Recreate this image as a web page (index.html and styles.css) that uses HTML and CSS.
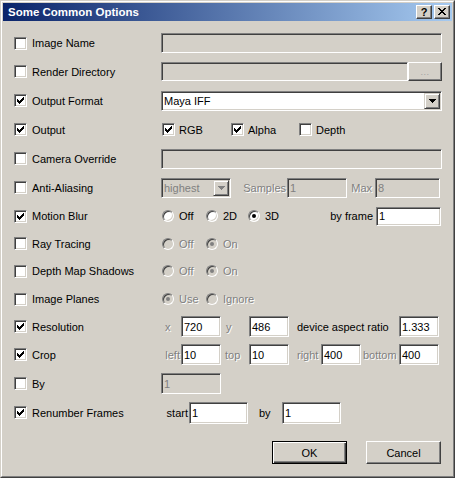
FILE: index.html
```html
<!DOCTYPE html>
<html>
<head>
<meta charset="utf-8">
<title>Some Common Options</title>
<link rel="stylesheet" href="styles.css">
</head>
<body>
<svg class="defs" width="0" height="0" aria-hidden="true">
  <symbol id="chk" viewBox="0 0 9 9"><path d="M1 3h1v1h1v1h1v-1h1v-1h1v-1h1v-1h1v3h-1v1h-1v1h-1v1h-1v1h-1v-1h-1v-1h-1z"/></symbol>
  <symbol id="arr" viewBox="0 0 7 4"><path d="M0 0h7v1h-1v1h-1v1h-1v1h-1v-1h-1v-1h-1v-1h-1z"/></symbol>
  <symbol id="cls" viewBox="0 0 8 7"><path d="M0 0h2v1h-2zM6 0h2v1h-2zM1 1h2v1h-2zM5 1h2v1h-2zM2 2h4v1h-4zM3 3h2v1h-2zM2 4h4v1h-4zM1 5h2v1h-2zM5 5h2v1h-2zM0 6h2v1h-2zM6 6h2v1h-2z"/></symbol>
</svg>
<div class="win">
  <div class="frame">
    <div class="titlebar">
      <span class="title">Some Common Options</span>
      <div class="tbtns">
        <span class="tbtn q">?</span>
        <span class="tbtn"><svg class="ico-x"><use href="#cls"/></svg></span>
      </div>
    </div>
    <div class="body">
      <div class="grid">
        <div class="lc"><span class="cb"></span><span>Image Name</span></div>
        <div class="rc"><span class="fld dis full"></span></div>

        <div class="lc"><span class="cb"></span><span>Render Directory</span></div>
        <div class="rc"><span class="fld dis h19 grow"></span><span class="dots">...</span></div>

        <div class="lc"><span class="cb"><svg class="ico-chk"><use href="#chk"/></svg></span><span>Output Format</span></div>
        <div class="rc"><div class="combo full"><span class="combo-text">Maya IFF</span><span class="abtn"><svg class="ico-arr"><use href="#arr"/></svg></span></div></div>

        <div class="lc"><span class="cb"><svg class="ico-chk"><use href="#chk"/></svg></span><span>Output</span></div>
        <div class="rc opts">
          <div class="opt"><span class="cb"><svg class="ico-chk"><use href="#chk"/></svg></span><span>RGB</span></div>
          <div class="opt"><span class="cb"><svg class="ico-chk"><use href="#chk"/></svg></span><span>Alpha</span></div>
          <div class="opt"><span class="cb"></span><span>Depth</span></div>
        </div>

        <div class="lc"><span class="cb"></span><span>Camera Override</span></div>
        <div class="rc"><span class="fld dis full"></span></div>

        <div class="lc"><span class="cb"></span><span>Anti-Aliasing</span></div>
        <div class="rc">
          <div class="combo dis w70"><span class="combo-text">highest</span><span class="abtn"><svg class="ico-arr"><use href="#arr"/></svg></span></div>
          <span class="slot dim right s-samples">Samples</span>
          <span class="fld dis w60">1</span>
          <span class="slot dim right s-max">Max</span>
          <span class="fld dis w65">8</span>
        </div>

        <div class="lc"><span class="cb"><svg class="ico-chk"><use href="#chk"/></svg></span><span>Motion Blur</span></div>
        <div class="rc radios">
          <div class="ri w44"><span class="rb"></span><span>Off</span></div>
          <div class="ri w42"><span class="rb"></span><span>2D</span></div>
          <div class="ri"><span class="rb on"></span><span>3D</span></div>
          <span class="byframe">by frame</span>
          <span class="fld w65 h19">1</span>
        </div>

        <div class="lc"><span class="cb"></span><span>Ray Tracing</span></div>
        <div class="rc radios">
          <div class="ri w44"><span class="rb dis"></span><span class="dim">Off</span></div>
          <div class="ri"><span class="rb dis on"></span><span class="dim">On</span></div>
        </div>

        <div class="lc"><span class="cb"></span><span>Depth Map Shadows</span></div>
        <div class="rc radios">
          <div class="ri w44"><span class="rb dis"></span><span class="dim">Off</span></div>
          <div class="ri"><span class="rb dis on"></span><span class="dim">On</span></div>
        </div>

        <div class="lc"><span class="cb"></span><span>Image Planes</span></div>
        <div class="rc radios">
          <div class="ri w44"><span class="rb dis on"></span><span class="dim">Use</span></div>
          <div class="ri"><span class="rb dis"></span><span class="dim">Ignore</span></div>
        </div>

        <div class="lc"><span class="cb"><svg class="ico-chk"><use href="#chk"/></svg></span><span>Resolution</span></div>
        <div class="rc">
          <span class="slot dim s-x">x</span>
          <span class="fld w40 h21">720</span>
          <span class="slot dim s-y">y</span>
          <span class="fld w40 h21">486</span>
          <span class="slot s-dar">device aspect ratio</span>
          <span class="fld w40 h21">1.333</span>
        </div>

        <div class="lc"><span class="cb"><svg class="ico-chk"><use href="#chk"/></svg></span><span>Crop</span></div>
        <div class="rc">
          <span class="slot dim right s-left">left</span>
          <span class="fld w40 h21">10</span>
          <span class="slot dim s-top">top</span>
          <span class="fld w40 h21">10</span>
          <span class="slot dim s-right">right</span>
          <span class="fld w40 h21">400</span>
          <span class="slot dim s-bottom">bottom</span>
          <span class="fld w40 h21">400</span>
        </div>

        <div class="lc"><span class="cb"></span><span>By</span></div>
        <div class="rc"><span class="fld dis w60 h21">1</span></div>

        <div class="lc"><span class="cb"><svg class="ico-chk"><use href="#chk"/></svg></span><span>Renumber Frames</span></div>
        <div class="rc">
          <span class="slot right s-start">start</span>
          <span class="fld w59 h22">1</span>
          <span class="slot s-by">by</span>
          <span class="fld w59 h22">1</span>
        </div>
      </div>
      <div class="footer">
        <button class="btn def">OK</button>
        <button class="btn">Cancel</button>
      </div>
    </div>
  </div>
</div>
</body>
</html>
```
FILE: styles.css
```css
html, body {
  margin: 0;
  padding: 0;
  background: #d4d0c8;
  font-family: "Liberation Sans", Arial, sans-serif;
  font-size: 11px;
  color: #000;
}

.defs {
  position: absolute;
  width: 0;
  height: 0;
  overflow: hidden;
}

.win {
  width: 455px;
  height: 478px;
  box-sizing: border-box;
  border: 1px solid;
  border-color: #d4d0c8 #404040 #404040 #d4d0c8;
  background: #d4d0c8;
}

.frame {
  height: 100%;
  box-sizing: border-box;
  border: 1px solid;
  border-color: #fff #808080 #808080 #fff;
  padding: 1px;
  display: flex;
  flex-direction: column;
}

.titlebar {
  height: 18px;
  flex: none;
  display: flex;
  align-items: center;
  justify-content: space-between;
  padding: 0 2px 0 5px;
  background: linear-gradient(to right, #0a246a, #a6caf0);
}

.title {
  color: #fff;
  font-weight: bold;
  font-size: 11.5px;
  line-height: 18px;
}

.tbtns {
  display: flex;
  gap: 2px;
}

.tbtn {
  width: 16px;
  height: 14px;
  box-sizing: border-box;
  background: #d4d0c8;
  border: 1px solid;
  border-color: #fff #404040 #404040 #fff;
  box-shadow: inset -1px -1px #808080;
  display: flex;
  align-items: center;
  justify-content: center;
}

.tbtn.q {
  font-weight: bold;
  font-size: 11px;
  line-height: 12px;
  padding-bottom: 1px;
}

.ico-x {
  width: 8px;
  height: 7px;
  fill: #000;
  margin-bottom: 1px;
}

.body {
  padding: 8px 0 0 11px;
}

.grid {
  display: grid;
  grid-template-columns: 147px 281px;
  grid-template-rows: 28px 29px 29px 29px 29px 29px 28px 27px 28px 28px 27px 29px 29px 29px;
}

.lc {
  display: flex;
  align-items: center;
  gap: 5px;
  white-space: nowrap;
}

.rc {
  display: flex;
  align-items: center;
  white-space: nowrap;
}

/* checkbox */
.cb {
  width: 13px;
  height: 13px;
  box-sizing: border-box;
  flex: none;
  border: 1px solid;
  border-color: #808080 #fff #fff #808080;
  box-shadow: inset 1px 1px #404040, inset -1px -1px #d4d0c8;
  background: #fff;
}

.ico-chk {
  display: block;
  width: 9px;
  height: 9px;
  margin: 1px;
  fill: #000;
}

/* radio */
.rb {
  width: 12px;
  height: 12px;
  box-sizing: border-box;
  flex: none;
  border-radius: 50%;
  border: 1px solid;
  border-color: #808080 #fff #fff #808080;
  box-shadow: inset 1px 1px #404040, inset -1px -1px #d4d0c8;
  background: #fff;
  display: flex;
  align-items: center;
  justify-content: center;
}

.rb.on::after {
  content: "";
  width: 4px;
  height: 4px;
  border-radius: 50%;
  background: #000;
}

.rb.dis {
  background: #d4d0c8;
}

.rb.dis.on::after {
  background: #808080;
}

.radios {
  padding-left: 1px;
}

.ri {
  display: flex;
  align-items: center;
  gap: 5px;
  flex: none;
}

.w44 { width: 44px; }
.w42 { width: 42px; }

.byframe {
  margin-left: auto;
  margin-right: 3px;
}

.dim {
  color: #808080;
  text-shadow: 1px 1px 0 #fff;
}

/* text fields */
.fld {
  height: 20px;
  box-sizing: border-box;
  flex: none;
  border: 1px solid;
  border-color: #808080 #fff #fff #808080;
  box-shadow: inset 1px 1px #404040, inset -1px -1px #d4d0c8;
  background: #fff;
  padding: 0 2px 0 2px;
  display: flex;
  align-items: center;
  overflow: hidden;
}

.fld.dis {
  background: #d4d0c8;
  color: #808080;
}

.h19 { height: 19px; }
.h21 { height: 21px; }
.h22 { height: 22px; }

.full { width: 281px; }
.grow { flex: 1; }
.w40 { width: 40px; }
.w59 { width: 59px; }
.w60 { width: 60px; }
.w65 { width: 65px; margin-right: 1px; }
.w70 { width: 70px; }

.rc .w65 { margin-left: 0; }

.dots {
  width: 34px;
  height: 19px;
  box-sizing: border-box;
  flex: none;
  border: 1px solid;
  border-color: #fff #404040 #404040 #fff;
  box-shadow: inset -1px -1px #808080;
  background: #d4d0c8;
  color: #a0a0a0;
  font-size: 9px;
  display: flex;
  align-items: flex-end;
  justify-content: center;
  padding-bottom: 3px;
  letter-spacing: 0.5px;
}

/* combo */
.combo {
  height: 20px;
  box-sizing: border-box;
  flex: none;
  border: 1px solid;
  border-color: #808080 #fff #fff #808080;
  box-shadow: inset 1px 1px #404040, inset -1px -1px #d4d0c8;
  background: #fff;
  padding: 1px;
  display: flex;
  align-items: center;
}

.combo.dis {
  background: #d4d0c8;
  color: #808080;
}

.combo-text {
  flex: 1;
  padding-left: 1px;
}

.abtn {
  width: 16px;
  height: 16px;
  box-sizing: border-box;
  flex: none;
  border: 1px solid;
  border-color: #d4d0c8 #404040 #404040 #d4d0c8;
  box-shadow: inset 1px 1px #fff, inset -1px -1px #808080;
  background: #d4d0c8;
  display: flex;
  align-items: center;
  justify-content: center;
}

.ico-arr {
  width: 7px;
  height: 4px;
  fill: #000;
}

.combo.dis .ico-arr {
  fill: #808080;
}

/* output checkboxes */
.opts {
  display: grid;
  grid-template-columns: 69px 68px auto;
  padding-left: 1px;
}

.opt {
  display: flex;
  align-items: center;
  gap: 4px;
}

/* label slots */
.slot {
  flex: none;
  box-sizing: border-box;
}

.right { text-align: right; }

.s-samples { width: 56px; padding-right: 1px; }
.s-max { width: 28px; padding-right: 3px; }
.s-x { width: 20px; padding-left: 4px; }
.s-y { width: 28px; padding-left: 5px; }
.s-dar { width: 110px; padding-left: 8px; }
.s-left { width: 20px; padding-right: 1px; }
.s-top { width: 28px; padding-left: 4px; }
.s-right { width: 32px; padding-left: 8px; }
.s-bottom { width: 38px; padding-left: 2px; }
.s-start { width: 28px; padding-right: 1px; }
.s-by { width: 34px; padding-left: 11px; }

/* footer buttons */
.footer {
  display: flex;
  justify-content: flex-end;
  gap: 19px;
  padding-right: 11px;
  margin-top: 14px;
}

.btn {
  width: 75px;
  height: 23px;
  box-sizing: border-box;
  margin: 0;
  padding: 0;
  font-family: "Liberation Sans", Arial, sans-serif;
  font-size: 11px;
  color: #000;
  background: #d4d0c8;
  border: 1px solid;
  border-color: #fff #404040 #404040 #fff;
  box-shadow: inset -1px -1px #808080;
}

.btn.def {
  border-color: #000;
  box-shadow: inset 1px 1px #fff, inset -1px -1px #404040, inset -2px -2px #808080;
}
```
